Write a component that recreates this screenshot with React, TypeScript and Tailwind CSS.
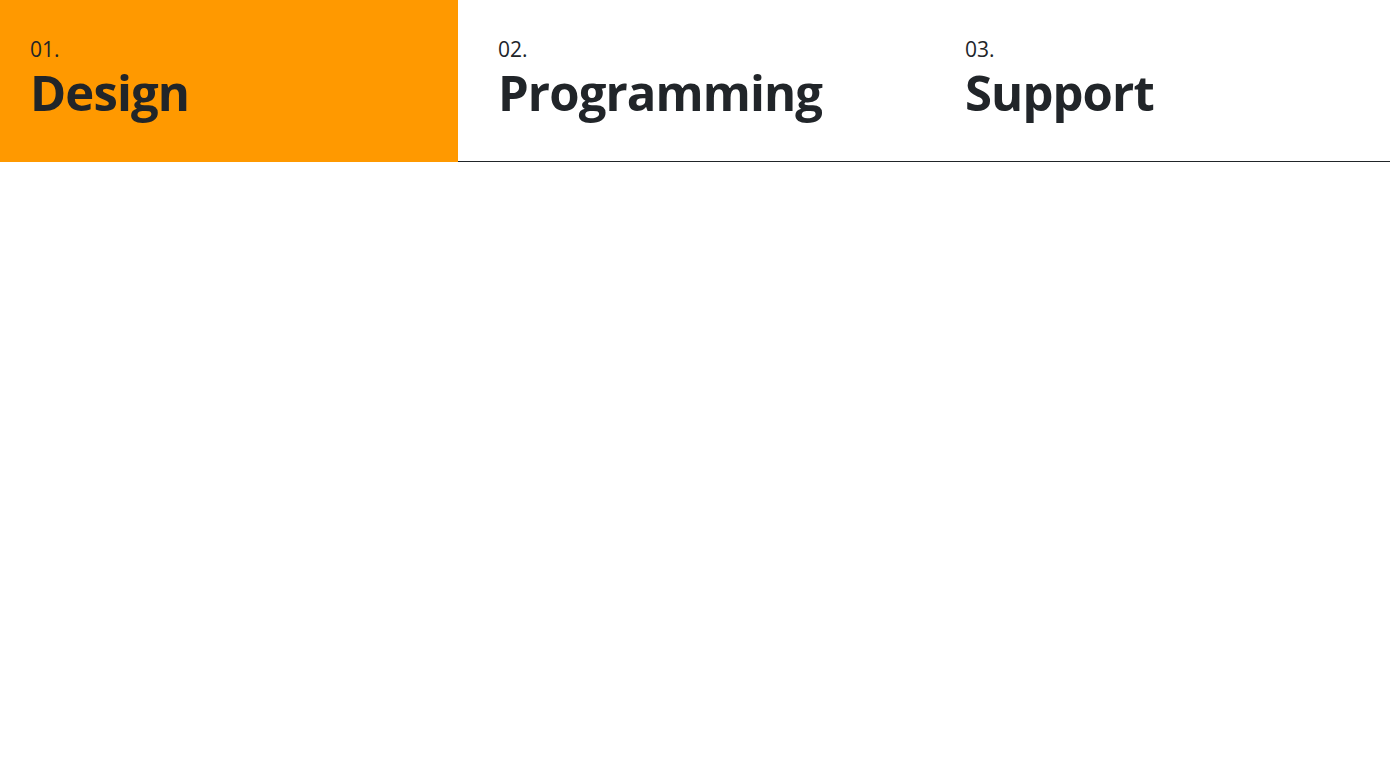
import React from "react";

type Tab = { num: string; title: string; active?: boolean };

const tabs: Tab[] = [
  { num: "01.", title: "Design", active: true },
  { num: "02.", title: "Programming" },
  { num: "03.", title: "Support" },
];

export default function App() {
  return (
    <div
      className="min-h-screen bg-white text-[#212529]"
      style={{ fontFamily: '"Open Sans", "Noto Sans", sans-serif' }}
    >
      <div className="grid grid-cols-[458px_457px_1fr] gap-x-[10px] h-[162px] border-b border-[#212529]">
        {tabs.map((t) => (
          <div
            key={t.num}
            className={
              t.active
                ? "bg-[#ff9900] h-[162px] pl-[30px] pt-[35px]"
                : "pl-[30px] pt-[35px]"
            }
          >
            <div className="text-[21px] leading-[28px]">{t.num}</div>
            <div className="mt-[5px] text-[49px] leading-[49px] font-bold tracking-[-0.9px]">
              {t.title}
            </div>
          </div>
        ))}
      </div>
    </div>
  );
}
